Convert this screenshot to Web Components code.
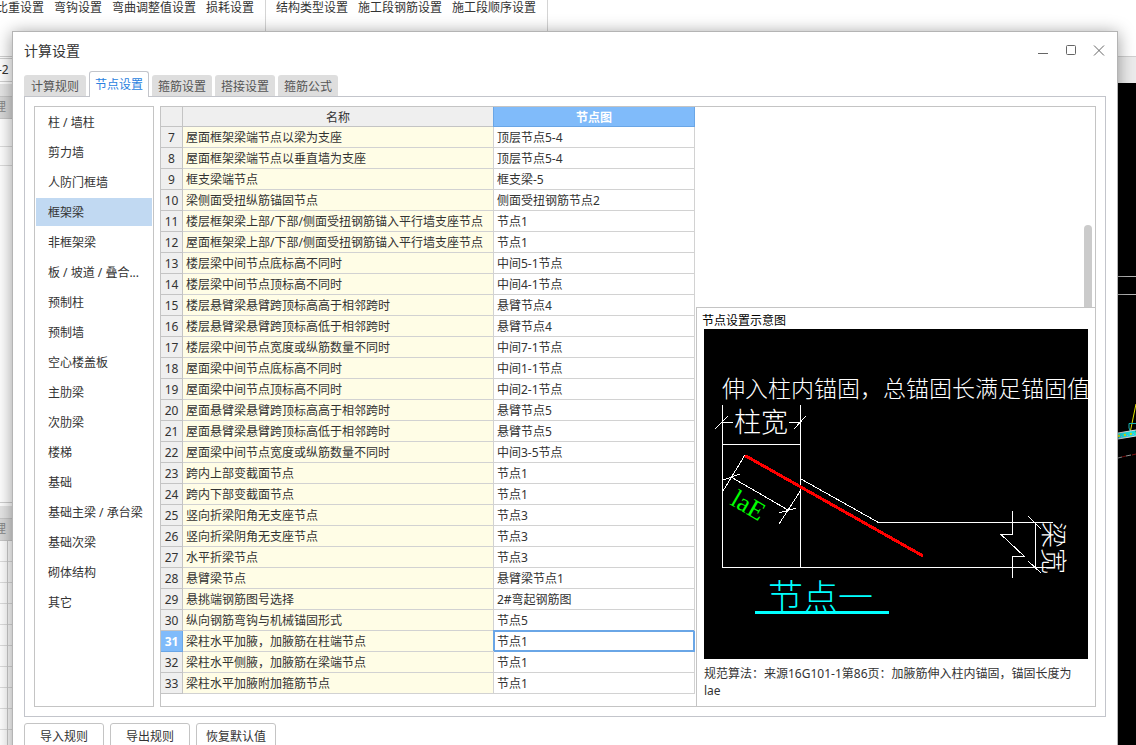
<!DOCTYPE html>
<html lang="zh-CN">
<head>
  <meta charset="utf-8">
  <title>计算设置</title>
  <style>
    body {
      margin: 0;
      height: 100vh;
      overflow: hidden;
      background: #fff;
      color: #333;
      font: 12px/18px "Noto Sans", "Noto Sans CJK SC", sans-serif;
    }
  </style>
</head>
<body>
  <app-backdrop>
    <app-ribbon slot="ribbon"></app-ribbon>
    <side-dock slot="dock"></side-dock>
    <model-view slot="view"></model-view>
  </app-backdrop>

  <settings-dialog heading="计算设置">
    <tab-strip slot="tabs" data-active="1" data-tabs="计算规则,节点设置,箍筋设置,搭接设置,箍筋公式"></tab-strip>
    <category-list slot="side" data-active="3"></category-list>
    <node-table slot="main"></node-table>
    <node-preview slot="detail" heading="节点设置示意图">
      <node-drawing></node-drawing>
      <span slot="note">规范算法：来源16G101-1第86页：加腋筋伸入柱内锚固，锚固长度为lae</span>
    </node-preview>
    <push-button slot="actions">导入规则</push-button>
    <push-button slot="actions">导出规则</push-button>
    <push-button slot="actions">恢复默认值</push-button>
  </settings-dialog>

  <script>
    class AppBackdrop extends HTMLElement {
      constructor() {
        super();
        this.attachShadow({ mode: 'open' });
        this.shadowRoot.innerHTML = `
          <style>
            :host {
              display: flex;
              flex-direction: column;
              height: 100vh;
            }
            .bar {
              height: 26px;
              background: #ececec;
            }
            .work {
              flex: 1;
              display: flex;
              min-height: 0;
            }
            .right {
              flex: 1;
              display: flex;
              flex-direction: column;
            }
            ::slotted([slot=view]) { flex: 1; }
          </style>
          <slot name="ribbon"></slot>
          <div class="work">
            <slot name="dock"></slot>
            <div class="right">
              <div class="bar"></div>
              <slot name="view"></slot>
            </div>
          </div>
        `;
      }
    }

    class AppRibbon extends HTMLElement {
      constructor() {
        super();
        this.attachShadow({ mode: 'open' });
        const groups = [
          ['比重设置', '弯钩设置', '弯曲调整值设置', '损耗设置'],
          ['结构类型设置', '施工段钢筋设置', '施工段顺序设置']
        ];
        this.shadowRoot.innerHTML = `
          <style>
            :host {
              display: flex;
              height: 56px;
              margin-left: -4px;
              border-bottom: 1px solid #d0d0d0;
              white-space: nowrap;
            }
            .group {
              display: flex;
              align-items: flex-start;
              gap: 10px;
              padding-right: 11px;
              border-right: 1px solid #d4d4d4;
            }
            .group + .group { padding-left: 10px; }
            button {
              padding: 0;
              border: 0;
              background: none;
              color: inherit;
              font: inherit;
              line-height: 16px;
            }
          </style>
          ${groups.map(g => `<div class="group">${g.map(t => `<button>${t}</button>`).join('')}</div>`).join('')}
        `;
      }
    }

    class SideDock extends HTMLElement {
      constructor() {
        super();
        this.attachShadow({ mode: 'open' });
        this.shadowRoot.innerHTML = `
          <style>
            :host {
              display: block;
              width: 240px;
              overflow: hidden;
              background: #fff;
            }
            .floor {
              box-sizing: border-box;
              height: 24px;
              margin: 1px 0 2px;
              border: solid #d0d0d0;
              border-width: 1px 0;
              line-height: 22px;
              text-indent: -2px;
            }
            .cap { height: 12px; background: #e6e6e6; }
            .head {
              height: 21px;
              border: solid #c8c8c8;
              border-width: 1px 0;
              background: #d9d9d9;
              color: #888;
              line-height: 20px;
              text-indent: -6px;
            }
            .line { height: 27px; border-bottom: 1px solid #ddd; }
            .line.short { height: 18px; }
            .tree { height: 336px; border-bottom: 1px solid #d0d0d0; }
            .gap { height: 3px; }
            .row {
              height: 20px;
              border-bottom: 1px solid #ddd;
            }
            .row::before {
              content: "";
              display: block;
              width: 7px;
              height: 21px;
              border-right: 1px solid #ccc;
            }
          </style>
          <div class="floor">-2</div>
          <div class="cap"></div>
          <div class="head">理</div>
          <div class="line"></div>
          <div class="line short"></div>
          <div class="tree"></div>
          <div class="gap"></div>
          <div class="cap"></div>
          <div class="head">理</div>
          ${'<div class="row"></div>'.repeat(10)}
        `;
      }
    }

    class ModelView extends HTMLElement {
      constructor() {
        super();
        this.attachShadow({ mode: 'open' });
        this.shadowRoot.innerHTML = `
          <style>
            :host {
              display: flex;
              justify-content: flex-end;
              overflow: hidden;
              background: #000;
            }
            svg { flex: none; }
          </style>
          <svg width="18" height="662" viewBox="0 0 18 662" fill="none">
            <path d="M0 193.500H18M0 211.500H18" stroke="#b4b4b4"/>
            <path d="M12 350L18 321" stroke="#e6e600"/>
            <path d="M18 340.500H11V345L13 350" stroke="#19b5b5"/>
            <path d="M0 353L18 350" stroke="#20e0e0" stroke-width="6"/>
            <path d="M0 350L18 347M0 356L18 353" stroke="#ddd"/>
            <path d="M0 353L18 350" stroke="#e0e000" stroke-width="2" stroke-dasharray="2 4"/>
            <path d="M3 354L18 351" stroke="#f070f0" stroke-dasharray="1 5"/>
            <path d="M0 375L4 374M8 373L13 372" stroke="#999"/>
            <path d="M4 374L8 373M14 372L18 371" stroke="#801010"/>
          </svg>
        `;
      }
    }

    class SettingsDialog extends HTMLElement {
      constructor() {
        super();
        this.attachShadow({ mode: 'open' });
      }

      connectedCallback() {
        this.shadowRoot.innerHTML = `
          <style>
            :host {
              /* window floating over the application */
              position: absolute;
              top: 31px;
              left: 12px;
              right: 18px;
              padding: 0 11px 10px;
              border: 1px solid #b4b4b4;
              background: #fff;
              box-shadow: 0 2px 16px rgba(0, 0, 0, .4);
            }
            header {
              display: flex;
              align-items: center;
              height: 38px;
              padding-bottom: 1px;
            }
            h1 {
              flex: 1;
              margin: 0;
              font-size: 14px;
              font-weight: normal;
            }
            .win { display: flex; gap: 14px; }
            .win button {
              width: 14px;
              height: 14px;
              padding: 0;
              border: 0;
              background: none;
            }
            svg { display: block; }
            .panel {
              display: flex;
              padding: 9px;
              border: 1px solid #c3c5cb;
            }
            .box {
              flex: 1;
              display: flex;
              margin-left: 6px;
              border: 1px solid #c4c4c4;
            }
            footer {
              display: flex;
              gap: 6px;
              padding-top: 6px;
            }
          </style>
          <header>
            <h1>${this.getAttribute('heading')}</h1>
            <div class="win">
              <button aria-label="最小化"><svg width="14" height="14"><path d="M2 9.500H12" stroke="#666"/></svg></button>
              <button aria-label="最大化"><svg width="14" height="14"><rect x="2.500" y="1.500" width="9" height="9" rx="1" fill="none" stroke="#666"/></svg></button>
              <button aria-label="关闭"><svg width="14" height="14"><path d="M2 1.500L12 11.500M12 1.500L2 11.500" stroke="#666"/></svg></button>
            </div>
          </header>
          <slot name="tabs"></slot>
          <div class="panel">
            <slot name="side"></slot>
            <div class="box">
              <slot name="main"></slot>
              <slot name="detail"></slot>
            </div>
          </div>
          <footer><slot name="actions"></slot></footer>
        `;
      }
    }

    class TabStrip extends HTMLElement {
      constructor() {
        super();
        this.attachShadow({ mode: 'open' });
      }

      connectedCallback() {
        const active = Number(this.dataset.active);
        const tabs = this.dataset.tabs.split(',');
        this.shadowRoot.innerHTML = `
          <style>
            :host {
              display: flex;
              align-items: flex-end;
              gap: 3px;
              height: 25px;
            }
            button {
              box-sizing: border-box;
              height: 21px;
              padding: 2px 6px 0;
              border: 0;
              border-radius: 3px 3px 0 0;
              background: #dedede;
              color: #555;
              font: inherit;
            }
            button:first-of-type { padding: 2px 7px 0; }
            button[aria-selected=true] {
              height: 26px;
              padding: 0 5px;
              margin-bottom: -1px;
              border: 1px solid #c3c5cb;
              border-bottom: 0;
              background: #fff;
              color: #2a7fe0;
            }
          </style>
          ${tabs.map((t, i) => `<button role="tab" aria-selected="${i === active}">${t}</button>`).join('')}
        `;
        this.setAttribute('role', 'tablist');
      }
    }

    class CategoryList extends HTMLElement {
      constructor() {
        super();
        this.attachShadow({ mode: 'open' });
      }

      connectedCallback() {
        const active = Number(this.dataset.active);
        const items = ['柱 / 墙柱', '剪力墙', '人防门框墙', '框架梁', '非框架梁', '板 / 坡道 / 叠合...',
          '预制柱', '预制墙', '空心楼盖板', '主肋梁', '次肋梁', '楼梯', '基础', '基础主梁 / 承台梁',
          '基础次梁', '砌体结构', '其它'];
        this.shadowRoot.innerHTML = `
          <style>
            :host {
              box-sizing: border-box;
              display: flex;
              flex-direction: column;
              gap: 2px;
              width: 120px;
              padding: 1px;
              border: 1px solid #c4c4c4;
            }
            button {
              height: 28px;
              padding: 2px 0 0 12px;
              border: 0;
              background: none;
              color: inherit;
              font: inherit;
              text-align: left;
              white-space: nowrap;
            }
            .on { background: #c1d9f2; }
          </style>
          ${items.map((t, i) => `<button class="${i === active ? 'on' : ''}">${t}</button>`).join('')}
        `;
      }
    }

    class NodeTable extends HTMLElement {
      constructor() {
        super();
        this.attachShadow({ mode: 'open' });
        const first = 7;
        const current = 31;
        const rows = [
          ['屋面框架梁端节点以梁为支座', '顶层节点5-4'],
          ['屋面框架梁端节点以垂直墙为支座', '顶层节点5-4'],
          ['框支梁端节点', '框支梁-5'],
          ['梁侧面受扭纵筋锚固节点', '侧面受扭钢筋节点2'],
          ['楼层框架梁上部/下部/侧面受扭钢筋锚入平行墙支座节点', '节点1'],
          ['屋面框架梁上部/下部/侧面受扭钢筋锚入平行墙支座节点', '节点1'],
          ['楼层梁中间节点底标高不同时', '中间5-1节点'],
          ['楼层梁中间节点顶标高不同时', '中间4-1节点'],
          ['楼层悬臂梁悬臂跨顶标高高于相邻跨时', '悬臂节点4'],
          ['楼层悬臂梁悬臂跨顶标高低于相邻跨时', '悬臂节点4'],
          ['楼层梁中间节点宽度或纵筋数量不同时', '中间7-1节点'],
          ['屋面梁中间节点底标高不同时', '中间1-1节点'],
          ['屋面梁中间节点顶标高不同时', '中间2-1节点'],
          ['屋面悬臂梁悬臂跨顶标高高于相邻跨时', '悬臂节点5'],
          ['屋面悬臂梁悬臂跨顶标高低于相邻跨时', '悬臂节点5'],
          ['屋面梁中间节点宽度或纵筋数量不同时', '中间3-5节点'],
          ['跨内上部变截面节点', '节点1'],
          ['跨内下部变截面节点', '节点1'],
          ['竖向折梁阳角无支座节点', '节点3'],
          ['竖向折梁阴角无支座节点', '节点3'],
          ['水平折梁节点', '节点3'],
          ['悬臂梁节点', '悬臂梁节点1'],
          ['悬挑端钢筋图号选择', '2#弯起钢筋图'],
          ['纵向钢筋弯钩与机械锚固形式', '节点5'],
          ['梁柱水平加腋，加腋筋在柱端节点', '节点1'],
          ['梁柱水平侧腋，加腋筋在梁端节点', '节点1'],
          ['梁柱水平加腋附加箍筋节点', '节点1']
        ];
        this.shadowRoot.innerHTML = `
          <style>
            :host {
              display: block;
              padding: 0 1px 12px 0;
            }
            table {
              width: 534px;
              table-layout: fixed;
              border-spacing: 0;
            }
            th, td {
              box-sizing: border-box;
              height: 21px;
              padding: 2px 3px 0;
              border: solid #d2d2d2;
              border-width: 0 1px 1px 0;
              line-height: 18px;
              text-align: left;
              white-space: nowrap;
            }
            th {
              padding: 2px 0 0;
              border-color: #c4c4c4;
              background: #efefef;
              font-weight: normal;
              text-align: center;
            }
            thead th { height: 20px; line-height: 17px; }
            thead th.on, tr.on th {
              border-color: #6aa6e6;
              background: #80bbfa;
              color: #fff;
              font-weight: bold;
            }
            thead th.on { box-shadow: -1px 0 #6aa6e6; }
            td:nth-child(2) { background: #fffde6; }
            tr.on td:last-child {
              border-color: #6aa6e6;
              box-shadow: -1px -1px #6aa6e6, inset 0 0 0 1px #6aa6e6;
            }
          </style>
          <table>
            <colgroup><col style="width:22px"><col style="width:311px"><col></colgroup>
            <thead><tr><th></th><th>名称</th><th class="on">节点图</th></tr></thead>
            <tbody>
              ${rows.map((r, i) => `
                <tr class="${first + i === current ? 'on' : ''}"><th>${first + i}</th><td>${r[0]}</td><td>${r[1]}</td></tr>
              `).join('')}
            </tbody>
          </table>
        `;
      }
    }

    class NodePreview extends HTMLElement {
      constructor() {
        super();
        this.attachShadow({ mode: 'open' });
      }

      connectedCallback() {
        this.shadowRoot.innerHTML = `
          <style>
            :host {
              flex: 1;
              display: flex;
              flex-direction: column;
              min-width: 0;
            }
            .scroll {
              flex: 1;
              display: flex;
              justify-content: flex-end;
              align-items: flex-end;
              padding-right: 3px;
            }
            .thumb {
              width: 8px;
              height: 82px;
              border-radius: 4px 4px 0 0;
              background: #cbcbcb;
            }
            .card {
              border: solid #c4c4c4;
              border-width: 1px 0 0 1px;
            }
            h2 {
              margin: 0;
              padding: 5px 5px 0;
              color: #000;
              font-size: 12px;
              font-weight: normal;
              line-height: 16px;
            }
            .pic { padding: 0 7px; }
            p {
              margin: 0;
              padding: 6px 7px 7px;
              line-height: 17px;
            }
          </style>
          <div class="scroll"><div class="thumb"></div></div>
          <div class="card">
            <h2>${this.getAttribute('heading')}</h2>
            <div class="pic"><slot></slot></div>
            <p><slot name="note"></slot></p>
          </div>
        `;
      }
    }

    class NodeDrawing extends HTMLElement {
      constructor() {
        super();
        this.attachShadow({ mode: 'open' });
        this.shadowRoot.innerHTML = `
          <style>
            :host {
              display: block;
              background: #000;
            }
            svg {
              display: block;
              width: 100%;
              height: 330px;
            }
            text {
              font-family: "Liberation Serif", "Noto Sans CJK SC", serif;
              font-weight: 300;
              fill: #fff;
            }
          </style>
          <svg viewBox="0 0 384 330" fill="none" stroke="none">
            <text x="18" y="68" font-size="23">伸入柱内锚固，总锚固长满足锚固值</text>
            <text x="30" y="103" font-size="27">柱宽</text>
            <g stroke="#fff" shape-rendering="crispEdges">
              <!-- column and beam outline -->
              <path d="M18.500 76V238.500H349M96.500 76V238M18 115.500H97"/>
              <path d="M97 150L174.500 193.500H349"/>
              <!-- column width -->
              <path d="M18 93.500H29M11 100L24 87M85 93.500H97M90 100L102 87"/>
              <!-- anchorage length -->
              <path d="M41 126L19 162M97 161L75 195M27 148L84 181M19 151L36 145M75 184L92 179"/>
              <!-- break line -->
              <path d="M308.500 182V205.500H297L320.500 227.500H308.500V249"/>
              <!-- beam width -->
              <path d="M331.500 193V239M324 187L337 200M324 232L337 244"/>
            </g>
            <path d="M41 126.500L219 227" stroke="#f00" stroke-width="3" shape-rendering="crispEdges"/>
            <text transform="translate(25 175) rotate(30)" font-size="26" style="fill:#0f0">laE</text>
            <text transform="translate(340 193) rotate(90)" font-size="26">梁宽</text>
            <text x="64" y="281" font-size="35" style="fill:#0ff">节点一</text>
            <path d="M51 283.500H185" stroke="#0ff" stroke-width="3"/>
          </svg>
        `;
      }
    }

    class PushButton extends HTMLElement {
      constructor() {
        super();
        this.attachShadow({ mode: 'open' });
        this.shadowRoot.innerHTML = `
          <style>
            :host { display: block; }
            button {
              width: 80px;
              height: 27px;
              padding: 0;
              border: 1px solid #c4c4c4;
              border-radius: 3px;
              background: #fff;
              color: inherit;
              font: inherit;
            }
          </style>
          <button><slot></slot></button>
        `;
      }
    }

    customElements.define('app-backdrop', AppBackdrop);
    customElements.define('app-ribbon', AppRibbon);
    customElements.define('side-dock', SideDock);
    customElements.define('model-view', ModelView);
    customElements.define('settings-dialog', SettingsDialog);
    customElements.define('tab-strip', TabStrip);
    customElements.define('category-list', CategoryList);
    customElements.define('node-table', NodeTable);
    customElements.define('node-preview', NodePreview);
    customElements.define('node-drawing', NodeDrawing);
    customElements.define('push-button', PushButton);
  </script>
</body>
</html>
